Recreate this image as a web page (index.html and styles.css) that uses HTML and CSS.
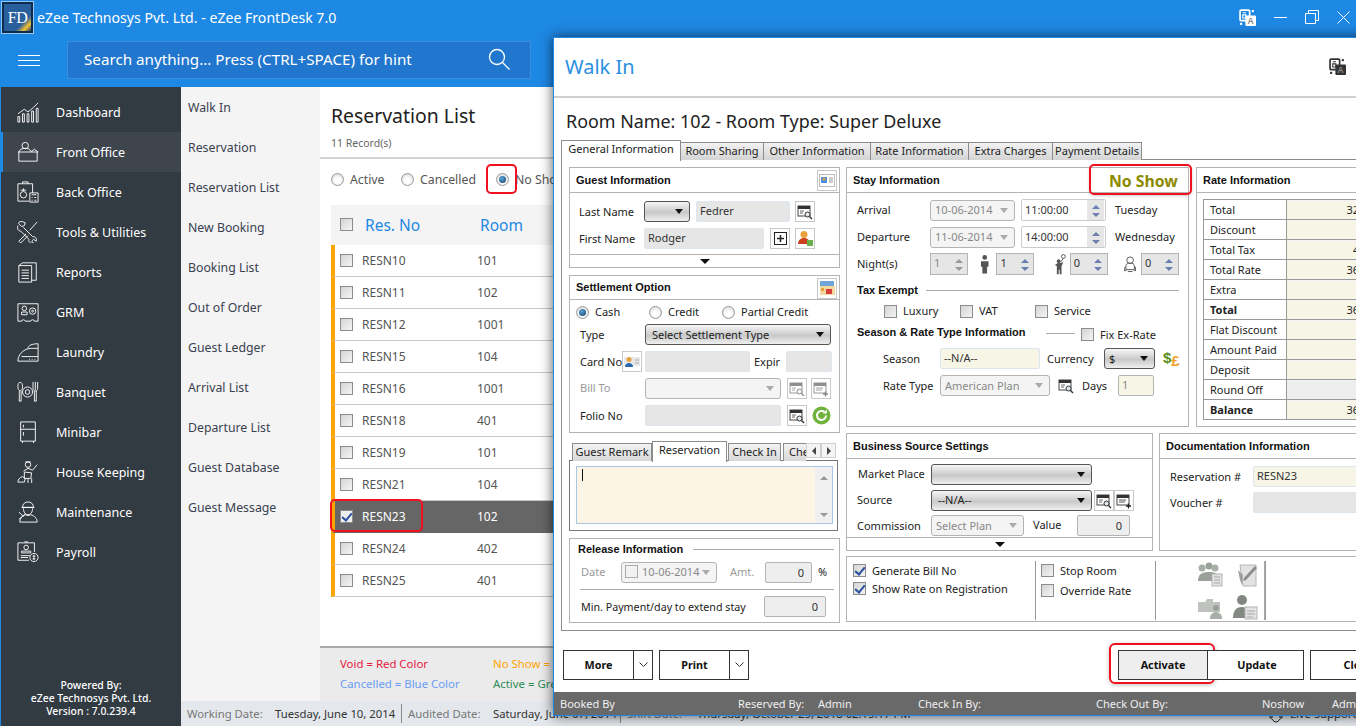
FILE: index.html
```html
<!DOCTYPE html>
<html lang="en">
<head>
<meta charset="utf-8">
<title>eZee FrontDesk 7.0</title>
<link rel="stylesheet" href="styles.css">
</head>
<body>
<svg class="defs" aria-hidden="true">
  <symbol id="i-cal" viewBox="0 0 16 16">
    <rect x="1" y="2" width="12" height="10" fill="#fff" stroke="#444"/>
    <rect x="1" y="2" width="12" height="3" fill="#333"/>
    <path d="M3 7h4M3 9h3" stroke="#666"/>
    <circle cx="10.5" cy="10.5" r="2.5" fill="#dfe8ee" stroke="#333"/>
    <path d="M12.5 12.5l2.5 2.5" stroke="#333" stroke-width="1.4"/>
  </symbol>
  <symbol id="i-add" viewBox="0 0 16 16">
    <rect x="1" y="2" width="12" height="10" fill="#fff" stroke="#444"/>
    <rect x="1" y="2" width="12" height="3" fill="#333"/>
    <path d="M3 7h7M3 9h6" stroke="#555"/>
    <path d="M12.5 10.500v5M10 13h5" stroke="#222" stroke-width="1.300"/>
  </symbol>
  <symbol id="i-lang" viewBox="0 0 16 16">
    <rect x="1" y="1" width="9" height="10" rx="1" fill="none" stroke="currentColor" stroke-width="1.600"/>
    <rect x="6" y="6" width="10" height="10" rx="1" fill="currentColor"/>
    <path d="M3.500 3.500h3M3.500 5.500h3v3h-3z" fill="none" stroke="currentColor"/>
    <text x="11" y="14.500" class="lang-a" text-anchor="middle">A</text>
    <rect x="12" y="1" width="2" height="2" fill="currentColor"/>
    <rect x="1" y="13" width="2" height="2" fill="currentColor"/>
  </symbol>
</svg>

<div class="app">
  <header class="top">
    <div class="titlebar">
      <div class="logo"><span>FD</span></div>
      <div class="app-title">eZee Technosys Pvt. Ltd. - eZee FrontDesk 7.0</div>
      <div class="winctl">
        <svg class="lang-ic light" width="17" height="17"><use href="#i-lang"/></svg>
        <svg width="13" height="15" viewBox="0 0 13 15"><path d="M0 7.500h13" stroke="#fff"/></svg>
        <svg width="14" height="15" viewBox="0 0 14 15"><path d="M3.500 3.500v-3h10v10h-3M.5 3.500h10v10H.5z" fill="none" stroke="#fff"/></svg>
        <svg width="13" height="15" viewBox="0 0 13 15"><path d="M.5 1.500l12 12M12.500 1.500l-12 12" stroke="#fff"/></svg>
      </div>
    </div>
    <div class="searchbar">
      <div class="burger"><i></i><i></i><i></i></div>
      <div class="search">
        <span>Search anything... Press (CTRL+SPACE) for hint</span>
        <svg width="22" height="22" viewBox="0 0 22 22"><circle cx="9" cy="9" r="7.500" fill="none" stroke="#fff" stroke-width="1.300"/><path d="M14.500 14.500l7 7" stroke="#fff" stroke-width="1.300"/></svg>
      </div>
    </div>
  </header>

  <div class="workspace">
    <nav class="side">
      <ul class="side-list">
        <li class="side-item">
          <svg class="nav-ic" viewBox="0 0 24 24"><path d="M1 14l7-5 4 3 6-5 5-5M1 17h2v6H1zM6 14h2v9H6zM11 14h2v9h-2zM16 11h2v12h-2zM21 8h2v15h-2z"/></svg>
          <span>Dashboard</span></li>
        <li class="side-item active">
          <svg class="nav-ic" viewBox="0 0 24 24"><circle cx="9" cy="5" r="3.500"/><path d="M2 12c1-3 4-4 7-4s5 1 6 3M15 12l4-3 4 3M1 12h22M2 12v10h20V12"/></svg>
          <span>Front Office</span></li>
        <li class="side-item">
          <svg class="nav-ic" viewBox="0 0 24 24"><path d="M1 3h16v10M1 3v19h12M6 3V1h6v2M14 13h9v10h-9zM16 15h5M16 18h1M19 18h2M16 21h1M19 21h2"/><circle cx="7" cy="15" r="3.500"/><path d="M7 8v3M4 10h6"/></svg>
          <span>Back Office</span></li>
        <li class="side-item">
          <svg class="nav-ic" viewBox="0 0 24 24"><path d="M2 3l3 3 3-1 1-3C6 0 1 0 2 3zM7 7l10 10c3 0 5 2 4 5l-3-2-2 2 2 2c-3 1-6-1-5-4L4 11c-3 0-4-3-3-6M22 1l-8 9M10 14l-8 8 2 2 8-8"/></svg>
          <span>Tools &amp; Utilities</span></li>
        <li class="side-item">
          <svg class="nav-ic" viewBox="0 0 24 24"><path d="M2 5h14v18H2zM2 5l4-3h15v19h-5M5 10h8M5 13h8M5 16h8M5 19h8"/></svg>
          <span>Reports</span></li>
        <li class="side-item">
          <svg class="nav-ic" viewBox="0 0 24 24"><path d="M1 3h22v19h-4c0-2-4-2-4 0H9c0-2-4-2-4 0H1z"/><circle cx="8" cy="8" r="2.500"/><path d="M5 15v-3h6v3z"/><circle cx="17" cy="11" r="3.500"/><circle cx="17" cy="11" r="1"/></svg>
          <span>GRM</span></li>
        <li class="side-item">
          <svg class="nav-ic" viewBox="0 0 24 24"><path d="M1 22c0-7 6-14 15-14h7v14zM12 8c0-3 4-5 11-5v5M5 17h18M13 20h1M16 20h1M19 20h1"/></svg>
          <span>Laundry</span></li>
        <li class="side-item">
          <svg class="nav-ic" viewBox="0 0 24 24"><ellipse cx="3.500" cy="6" rx="2.500" ry="4.500"/><path d="M2.500 11v11h2V11M20 1v9M17.500 1v7c0 2 1 3 2.500 3s2.500-1 2.500-3V1M19 11v11h2V11"/><circle cx="11.500" cy="12" r="5.500"/><circle cx="11.500" cy="12" r="2.500"/></svg>
          <span>Banquet</span></li>
        <li class="side-item">
          <svg class="nav-ic" viewBox="0 0 24 24"><path d="M4 1h16v21H4zM4 9h16M7 4v3M7 12v4M6 22v2M18 22v2"/></svg>
          <span>Minibar</span></li>
        <li class="side-item">
          <svg class="nav-ic" viewBox="0 0 24 24"><circle cx="12" cy="4" r="3"/><path d="M9 1l6 0M7 11l5-3 5 2 5-6M8 12l8 1-1 6H8zM1 23c0-3 2-5 5-6l3 2-1 4zM12 19v5M16 19v5"/></svg>
          <span>House Keeping</span></li>
        <li class="side-item">
          <svg class="nav-ic" viewBox="0 0 24 24"><path d="M6 7c0-8 12-8 12 0zM5 7h14M7 8c0 4 2 7 5 7s5-3 5-7M3 23c0-4 3-7 6-8 2 1 4 1 6 0 4 1 7 4 7 8zM2 12l5 5M2 20l7-6"/></svg>
          <span>Maintenance</span></li>
        <li class="side-item">
          <svg class="nav-ic" viewBox="0 0 24 24"><path d="M19 12V2H1v19h12M8 1h4M5 13v-2h10v2zM4 16h10M4 18h8"/><circle cx="10" cy="7" r="2.500"/><circle cx="18.500" cy="18" r="4.500"/><path d="M18.500 15v6M17 16.500h3M17 19.500h3"/></svg>
          <span>Payroll</span></li>
      </ul>
      <div class="powered">
        <div>Powered By:</div>
        <div>eZee Technosys Pvt. Ltd.</div>
        <div>Version : 7.0.239.4</div>
      </div>
    </nav>

    <div class="content">
      <div class="columns">
        <ul class="submenu">
          <li>Walk In</li><li>Reservation</li><li>Reservation List</li><li>New Booking</li>
          <li>Booking List</li><li>Out of Order</li><li>Guest Ledger</li><li>Arrival List</li>
          <li>Departure List</li><li>Guest Database</li><li>Guest Message</li>
        </ul>
        <main class="main">
          <div class="main-head">
            <h1>Reservation List</h1>
            <div class="records">11 Record(s)</div>
          </div>
          <div class="filters">
            <label class="filter f-active"><i class="radio"></i>Active</label>
            <label class="filter f-cancel"><i class="radio"></i>Cancelled</label>
            <label class="filter"><i class="radio on mark-red"></i>No Show</label>
          </div>
          <div class="grid-table">
            <div class="gt-head">
              <span><i class="cb"></i></span><span>Res. No</span><span>Room</span>
            </div>
            <div class="gt-row"><span><i class="cb"></i></span><span>RESN10</span><span>101</span></div>
            <div class="gt-row"><span><i class="cb"></i></span><span>RESN11</span><span>102</span></div>
            <div class="gt-row"><span><i class="cb"></i></span><span>RESN12</span><span>1001</span></div>
            <div class="gt-row"><span><i class="cb"></i></span><span>RESN15</span><span>104</span></div>
            <div class="gt-row"><span><i class="cb"></i></span><span>RESN16</span><span>1001</span></div>
            <div class="gt-row"><span><i class="cb"></i></span><span>RESN18</span><span>401</span></div>
            <div class="gt-row"><span><i class="cb"></i></span><span>RESN19</span><span>101</span></div>
            <div class="gt-row"><span><i class="cb"></i></span><span>RESN21</span><span>104</span></div>
            <div class="gt-row selected"><span><i class="cb on"></i></span><span>RESN23</span><span>102</span></div>
            <div class="gt-row"><span><i class="cb"></i></span><span>RESN24</span><span>402</span></div>
            <div class="gt-row"><span><i class="cb"></i></span><span>RESN25</span><span>401</span></div>
          </div>
          <div class="legend">
            <span class="c-void">Void = Red Color</span><span class="c-noshow">No Show = Orange Color</span>
            <span class="c-cancel">Cancelled = Blue Color</span><span class="c-act">Active = Green Color</span>
          </div>
        </main>
      </div>
      <footer class="status">
        <span class="st-l wl-88">Working Date:</span><span class="st-v w-126">Tuesday, June 10, 2014</span>
        <span class="st-l st-sep wl-92">Audited Date:</span><span class="st-v w-127">Saturday, June 07, 2014</span>
        <span class="st-l st-sep wl-77">Shift Date:</span><span class="st-v w-571">Thursday, October 25, 2018 02:15:17 PM</span>
        <svg class="live-ic" width="16" height="18" viewBox="0 0 16 18"><path d="M3 9V7a5 5 0 0 1 10 0v2M2 9h2v4H2zM12 9h2v4h-2zM4 14c1 2 3 3 4 3s3-1 4-3" fill="none" stroke="#222"/></svg>
        <span class="st-v">Live Support</span>
      </footer>
    </div>
  </div>

  <section class="window">
    <div class="win-head">
      <h2>Walk In</h2>
      <svg class="lang-ic dark" width="17" height="17"><use href="#i-lang"/></svg>
    </div>
    <div class="room-title">Room Name: 102 - Room Type: Super Deluxe</div>

    <div class="tabs">
      <span class="tab active w-120">General Information</span>
      <span class="tab w-83">Room Sharing</span>
      <span class="tab w-107">Other Information</span>
      <span class="tab w-98">Rate Information</span>
      <span class="tab w-84">Extra Charges</span>
      <span class="tab w-89">Payment Details</span>
    </div>

    <div class="tabpage">
      <div class="col-left">
        <div class="panel h-guest">
          <div class="panel-h">
            <b>Guest Information</b>
            <span class="ibtn head-btn"><svg width="16" height="13" viewBox="0 0 16 13"><rect x=".5" y=".5" width="15" height="12" fill="#fff" stroke="#bbb"/><rect x="2" y="3" width="6" height="6" fill="#4a90d9"/><circle cx="5" cy="5" r="1.500" fill="#e8a04c"/><path d="M10 4h4M10 6h4M10 8h4" stroke="#999"/></svg></span>
          </div>
          <div class="panel-b guest-b">
            <div class="r">
              <span class="lbl w-65">Last Name</span>
              <span class="sel w-46"></span>
              <span class="inp w-94 ml-6">Fedrer</span>
              <span class="ibtn ml-5"><svg width="16" height="16"><use href="#i-cal"/></svg></span>
            </div>
            <div class="r mt-6">
              <span class="lbl w-65">First Name</span>
              <span class="inp w-120">Rodger</span>
              <span class="ibtn ml-6"><svg width="13" height="13" viewBox="0 0 13 13"><rect x=".5" y=".5" width="12" height="12" fill="#fff" stroke="#222"/><path d="M3 6.500h7M6.500 3v7" stroke="#222" stroke-width="1.500"/></svg></span>
              <span class="ibtn ml-5"><svg width="17" height="17" viewBox="0 0 17 17"><circle cx="7" cy="4.500" r="3.500" fill="#e9a23b"/><path d="M1 14c0-4 3-6 6-6s6 2 6 6z" fill="#c8401e"/><rect x="10" y="10" width="6" height="6" fill="#6ab04c"/></svg></span>
            </div>
          </div>
          <div class="collapse"><i></i></div>
        </div>

        <div class="panel h-settle mt-7">
          <div class="panel-h short">
            <b>Settlement Option</b>
            <span class="ibtn head-btn"><svg width="17" height="15" viewBox="0 0 17 15"><rect x="1" y="0" width="14" height="6" fill="#6fa5d8"/><rect x="1" y="5" width="15" height="9" fill="#f3d9a0"/><rect x="7" y="8" width="6" height="5" fill="#d93a3a"/><rect x="2" y="7" width="3" height="3" fill="#e9a23b"/></svg></span>
          </div>
          <div class="panel-b settle-b">
            <div class="r radios">
              <label class="ritem w-73"><i class="radio on"></i>Cash</label>
              <label class="ritem w-73"><i class="radio"></i>Credit</label>
              <label class="ritem"><i class="radio"></i>Partial Credit</label>
            </div>
            <div class="r mt-4 pl-4">
              <span class="lbl w-65">Type</span>
              <span class="sel w-186">Select Settlement Type</span>
            </div>
            <div class="r mt-6 pl-4">
              <span class="lbl w-42">Card No</span>
              <span class="ibtn"><svg width="16" height="16" viewBox="0 0 16 16"><rect x="0" y="3" width="16" height="9" fill="#e8e8e8"/><circle cx="5" cy="5.500" r="2.500" fill="#e9a23b"/><path d="M1 13c0-3 2-4 4-4s4 1 4 4z" fill="#2868b0"/><path d="M11 6h4M11 9h4" stroke="#aaa"/></svg></span>
              <span class="inp w-105 ml-3"></span>
              <span class="lbl ml-4 w-32">Expir</span>
              <span class="inp w-46"></span>
            </div>
            <div class="r mt-6 pl-4">
              <span class="lbl muted up w-65">Bill To</span>
              <span class="sel dis w-136"></span>
              <span class="ibtn ml-6 faded"><svg width="16" height="16"><use href="#i-cal"/></svg></span>
              <span class="ibtn ml-4 faded"><svg width="16" height="16"><use href="#i-add"/></svg></span>
            </div>
            <div class="r mt-6 pl-4">
              <span class="lbl w-65">Folio No</span>
              <span class="inp w-136"></span>
              <span class="ibtn ml-6"><svg width="16" height="16"><use href="#i-cal"/></svg></span>
              <span class="ibtn ml-4 green-wrap"><svg width="19" height="19" viewBox="0 0 19 19"><circle cx="9.500" cy="9.500" r="9" fill="#6fb33c"/><path d="M14 9.500a4.500 4.500 0 1 1-1.500-3.400" fill="none" stroke="#fff" stroke-width="2"/><path d="M15 3.500v4h-4z" fill="#fff"/></svg></span>
            </div>
          </div>
        </div>

        <div class="itabs mt-8">
          <span class="itab w-80">Guest Remark</span>
          <span class="itab active w-75">Reservation</span>
          <span class="itab w-53 ml-1">Check In</span>
          <span class="itab w-23 ml-2 cut">Check Out</span>
          <span class="arrow"><i class="tri-l"></i></span>
          <span class="arrow"><i class="tri-r"></i></span>
        </div>
        <div class="ipage">
          <div class="memo">
            <div class="memo-text"><i class="caret"></i></div>
            <div class="memo-scroll"><i class="tri-u"></i><i class="tri-d"></i></div>
          </div>
        </div>

        <div class="panel h-release mt-7">
          <div class="sec-title r"><b>Release Information</b><i class="rule ml-10"></i></div>
          <div class="r mt-6 ml-3">
            <span class="lbl muted up w-40">Date</span>
            <span class="sel dis up w-96 date-sel"><i class="cb grey"></i>10-06-2014</span>
            <span class="lbl muted up ml-13 w-35">Amt.</span>
            <span class="inp bordered num w-47">0</span>
            <span class="lbl up ml-6">%</span>
          </div>
          <div class="hr"></div>
          <div class="r mt-6 ml-3 min-row">
            <span class="lbl w-183 tight">Min. Payment/day to extend stay</span>
            <span class="inp bordered num w-62">0</span>
          </div>
        </div>
      </div>

      <div class="col-right">
        <div class="row-1">
          <div class="panel stay">
            <div class="panel-h">
              <b>Stay Information</b>
              <strong class="noshow">No Show</strong>
            </div>
            <div class="panel-b stay-b">
              <div class="r">
                <span class="lbl up w-73">Arrival</span>
                <span class="sel dis up w-85 grey-t">10-06-2014</span>
                <span class="spin plain w-85 ml-6"><span class="spin-v">11:00:00</span><span class="spin-b"><i class="tri-u blue"></i><i class="tri-d blue"></i></span></span>
                <span class="lbl up ml-9">Tuesday</span>
              </div>
              <div class="r mt-5">
                <span class="lbl up w-73">Departure</span>
                <span class="sel dis up w-85 grey-t">11-06-2014</span>
                <span class="spin plain w-85 ml-6"><span class="spin-v">14:00:00</span><span class="spin-b"><i class="tri-u blue"></i><i class="tri-d blue"></i></span></span>
                <span class="lbl up ml-9">Wednesday</span>
              </div>
              <div class="r mt-5">
                <span class="lbl up w-73">Night(s)</span>
                <span class="spin w-38"><span class="spin-v grey-t">1</span><span class="spin-b"><i class="tri-u"></i><i class="tri-d"></i></span></span>
                <svg class="ml-12" width="10" height="20" viewBox="0 0 10 20"><circle cx="5" cy="3" r="2.500" fill="#555"/><path d="M1 7h8v6H7.500v7h-5v-7H1z" fill="#555"/></svg>
                <span class="spin w-38 ml-7"><span class="spin-v">1</span><span class="spin-b"><i class="tri-u blue"></i><i class="tri-d blue"></i></span></span>
                <svg class="ml-20" width="12" height="22" viewBox="0 0 12 22"><circle cx="10" cy="3" r="2" fill="none" stroke="#555"/><path d="M10 5L7 9" stroke="#555"/><circle cx="5" cy="8" r="2" fill="#555"/><path d="M1 12l3-2h3l3-1-2 4v9H6v-5H5v5H3v-9z" fill="#555"/></svg>
                <span class="spin w-38 ml-4"><span class="spin-v">0</span><span class="spin-b"><i class="tri-u blue"></i><i class="tri-d blue"></i></span></span>
                <svg class="ml-16" width="13" height="18" viewBox="0 0 13 18"><circle cx="6.500" cy="5" r="3.500" fill="none" stroke="#555"/><path d="M2 11c0-2 2-3 4.500-3S11 9 11 11v4H2zM1 12l-.5 4h2M12 12l.5 4h-2M4 17h5" fill="none" stroke="#555"/></svg>
                <span class="spin w-38 ml-5"><span class="spin-v">0</span><span class="spin-b"><i class="tri-u blue"></i><i class="tri-d blue"></i></span></span>
              </div>
              <div class="r mt-8 sub-h"><b>Tax Exempt</b><i class="rule ml-8"></i></div>
              <div class="r mt-7 checks">
                <label class="citem w-76"><i class="cb"></i>Luxury</label>
                <label class="citem w-75"><i class="cb"></i>VAT</label>
                <label class="citem"><i class="cb"></i>Service</label>
              </div>
              <div class="r mt-7 season-h">
                <b class="w-189">Season &amp; Rate Type Information</b>
                <i class="rule-s"></i>
                <label class="citem ml-6"><i class="cb"></i>Fix Ex-Rate</label>
              </div>
              <div class="r mt-7 pl-26">
                <span class="lbl w-57">Season</span>
                <span class="inp cream w-100">--N/A--</span>
                <span class="lbl ml-7 w-57">Currency</span>
                <span class="sel cur w-51">$</span>
                <b class="money ml-8"><span>$</span><span>£</span></b>
              </div>
              <div class="r mt-6 pl-26">
                <span class="lbl w-57">Rate Type</span>
                <span class="sel dis w-110">American Plan</span>
                <svg class="ml-8" width="16" height="16"><use href="#i-cal"/></svg>
                <span class="lbl ml-8 w-36">Days</span>
                <span class="inp cream bordered grey-t w-36">1</span>
              </div>
            </div>
          </div>

          <div class="panel rate">
            <div class="panel-h"><b>Rate Information</b></div>
            <div class="rate-t">
              <div class="rt-r"><span>Total</span><span>320.00</span></div>
              <div class="rt-r"><span>Discount</span><span></span></div>
              <div class="rt-r"><span>Total Tax</span><span>40.00</span></div>
              <div class="rt-r"><span>Total Rate</span><span>360.00</span></div>
              <div class="rt-r"><span>Extra</span><span></span></div>
              <div class="rt-r bold"><span>Total</span><span>360.00</span></div>
              <div class="rt-r"><span>Flat Discount</span><span></span></div>
              <div class="rt-r"><span>Amount Paid</span><span></span></div>
              <div class="rt-r"><span>Deposit</span><span></span></div>
              <div class="rt-r grey"><span>Round Off</span><span></span></div>
              <div class="rt-r bold"><span>Balance</span><span>360.00</span></div>
            </div>
          </div>
        </div>

        <div class="row-2">
          <div class="panel biz">
            <div class="panel-h"><b>Business Source Settings</b></div>
            <div class="panel-b biz-b">
              <div class="r">
                <span class="lbl w-74 nudge up">Market Place</span>
                <span class="sel w-161"></span>
              </div>
              <div class="r mt-5">
                <span class="lbl up w-74">Source</span>
                <span class="sel up w-161">--N/A--</span>
                <span class="ibtn ml-2"><svg width="16" height="16"><use href="#i-cal"/></svg></span>
                <span class="ibtn"><svg width="16" height="16"><use href="#i-add"/></svg></span>
              </div>
              <div class="r mt-4">
                <span class="lbl w-74">Commission</span>
                <span class="sel dis w-93">Select Plan</span>
                <span class="lbl up ml-9 w-44">Value</span>
                <span class="inp bordered num w-53">0</span>
              </div>
            </div>
            <div class="collapse"><i></i></div>
          </div>

          <div class="panel doc">
            <div class="panel-h"><b>Documentation Information</b></div>
            <div class="panel-b doc-b">
              <div class="r">
                <span class="lbl w-83">Reservation #</span>
                <span class="inp cream w-200">RESN23</span>
              </div>
              <div class="r mt-5">
                <span class="lbl w-83">Voucher #</span>
                <span class="inp w-200"></span>
              </div>
            </div>
          </div>
        </div>

        <div class="panel opts">
          <div class="opt-col c1">
            <label class="citem"><i class="cb on"></i>Generate Bill No</label>
            <label class="citem"><i class="cb on"></i>Show Rate on Registration</label>
          </div>
          <div class="opt-col c2">
            <label class="citem"><i class="cb"></i>Stop Room</label>
            <label class="citem"><i class="cb"></i>Override Rate</label>
          </div>
          <div class="opt-col c3">
            <svg width="26" height="26" viewBox="0 0 26 26"><circle cx="5" cy="7" r="3.500" fill="#9aa09a"/><circle cx="12" cy="5" r="3.500" fill="#8a908a"/><circle cx="18" cy="7" r="3.500" fill="#9aa09a"/><path d="M1 20c0-7 4-9 11-9s10 2 10 7v2z" fill="#8a908a"/><rect x="15" y="13" width="10" height="12" fill="#ddd" stroke="#aaa"/><path d="M17 16h6M17 19h6M17 22h6" stroke="#999"/></svg>
            <svg width="26" height="26" viewBox="0 0 26 26"><path d="M8 4h16v21H11z" fill="#ddd" stroke="#aaa"/><path d="M6 9l5 5-1 10-2-5z" fill="#8a908a"/><path d="M12 17L23 5l2 2-11 12-3 1z" fill="#777"/></svg>
            <svg width="26" height="26" viewBox="0 0 26 26"><path d="M1 8h7l2-3h6v3h7v10H1z" fill="#b4b8b4"/><circle cx="19" cy="14" r="3" fill="#8a908a"/><path d="M13 25c0-5 3-7 6-7s6 2 6 7z" fill="#9aa09a"/></svg>
            <svg width="26" height="26" viewBox="0 0 26 26"><circle cx="10" cy="6" r="5" fill="#6e746e"/><path d="M1 24c0-8 4-11 9-11s8 3 8 11z" fill="#6e746e"/><rect x="13" y="13" width="12" height="12" fill="#ddd" stroke="#aaa"/><path d="M15 17h8M15 20h8M15 23h6" stroke="#999"/></svg>
          </div>
          <div class="opt-col c4"></div>
        </div>
      </div>
    </div>

    <div class="actions">
      <div class="split"><span class="btn w-71">More</span><span class="btn-arrow"><svg width="9" height="6" viewBox="0 0 9 6"><path d="M.5.500l4 4 4-4" fill="none" stroke="#333"/></svg></span></div>
      <div class="split ml-6"><span class="btn w-71">Print</span><span class="btn-arrow"><svg width="9" height="6" viewBox="0 0 9 6"><path d="M.5.500l4 4 4-4" fill="none" stroke="#333"/></svg></span></div>
      <span class="btn activate w-90">Activate</span>
      <span class="btn w-96 update">Update</span>
      <span class="btn w-96 ml-6">Close</span>
    </div>

    <div class="win-foot">
      <span class="w-178">Booked By</span>
      <span class="w-80">Reserved By:</span>
      <span class="w-100">Admin</span>
      <span class="w-178">Check In By:</span>
      <span class="w-166">Check Out By:</span>
      <span class="w-70">Noshow</span>
      <span>Admin</span>
    </div>
  </section>
</div>
</body>
</html>
```

FILE: styles.css
```css
*, *::before, *::after { box-sizing: border-box; }
html, body { margin: 0; padding: 0; height: 100%; overflow: hidden; }
body { font-family: "Noto Sans", "Open Sans", sans-serif; font-size: 11px; color: #222; background: #fff; }
ul { list-style: none; margin: 0; padding: 0; }
h1, h2 { margin: 0; font-weight: 400; }
.defs { position: absolute; width: 0; height: 0; }
label { display: inline-flex; align-items: center; }
i { display: block; flex: none; }

.app { width: 1356px; height: 726px; position: relative; overflow: hidden; display: flex; flex-direction: column; }

/* header */
.top { height: 87px; background: #1e88e5; color: #fff; flex: none; }
.titlebar { height: 40px; display: flex; align-items: flex-start; }
.logo { width: 31px; height: 31px; margin: 2px 0 0 2px; background: linear-gradient(135deg, #2a5f9e 70%, #f2c230 85%, #1c3d6e); border: 2px solid #0d2c52; outline: 1px solid #9cc8ef; display: flex; align-items: center; justify-content: center; flex: none; }
.logo span { font-family: "Liberation Serif", serif; font-size: 16px; line-height: 1; color: #fff; letter-spacing: -.5px; }
.app-title { margin: 8px 0 0 4px; font-size: 14.100px; line-height: 20px; }
.winctl { margin-left: auto; padding: 9px 6px 0 0; display: flex; align-items: center; gap: 18px; }
.lang-ic.light { color: #fff; }
.lang-ic.dark { color: #333; }
.lang-a { font: bold 8px "Liberation Sans", sans-serif; fill: #888; }
.searchbar { height: 47px; display: flex; align-items: flex-start; }
.burger { width: 22px; margin: 15px 27px 0 18px; display: flex; flex-direction: column; gap: 4px; }
.burger i { height: 1px; background: #fff; }
.search { width: 464px; height: 38px; margin-top: 1px; background: #2176cd; border: 1px solid #3d8fdb; display: flex; align-items: center; justify-content: space-between; padding: 0 20px 2px 16px; font-size: 15.200px; }

/* layout */
.workspace { flex: 1; display: flex; min-height: 0; }
.side { width: 181px; background: #323a42; border-left: 1px solid #1e88e5; color: #fff; padding-top: 5px; display: flex; flex-direction: column; flex: none; }
.side-list { flex: 1; }
.side-item { height: 40px; display: flex; align-items: center; font-size: 12.500px; padding-left: 16px; }
.side-item.active { background: #3e454d; border-left: 3px solid #1e88e5; margin-left: -1px; padding-left: 14px; }
.side-item span { margin-left: 17px; }
.nav-ic { width: 22px; height: 22px; fill: none; stroke: #fff; stroke-width: 1; flex: none; }
.powered { text-align: center; font-size: 10.400px; line-height: 13px; padding-bottom: 8px; font-weight: 500; }
.content { flex: 1; display: flex; flex-direction: column; min-width: 0; }
.columns { flex: 1; display: flex; min-height: 0; }
.submenu { width: 139px; background: #f4f4f4; padding: 1px 0 0 7px; font-size: 12.300px; color: #3a4150; flex: none; }
.submenu li { height: 40px; line-height: 40px; }
.main { flex: 1; display: flex; flex-direction: column; min-width: 0; }
.main-head { height: 72px; border-bottom: 2px solid #d4d4d4; padding: 15px 0 0 11px; flex: none; }
.main-head h1 { font-size: 19.400px; line-height: 28px; color: #222; }
.records { font-size: 10.500px; color: #666; margin-top: 6px; line-height: 14px; }
.filters { height: 46px; display: flex; align-items: center; padding: 0 0 6px 11px; font-size: 12.300px; color: #555; flex: none; }
.filter .radio { margin-right: 6px; }
.f-active { width: 70px; }
.f-cancel { width: 95px; }
.grid-table { margin-left: 11px; flex: 1; }
.gt-head { height: 40px; background: #f4f4f4; display: grid; grid-template-columns: 25px 115px 1fr; align-items: center; padding: 0 0 1px 9px; font-size: 15.500px; color: #1e88e5; }
.gt-row { height: 32px; border-left: 4px solid #ffa500; border-bottom: 1px solid #c8c8c8; display: grid; grid-template-columns: 27px 115px 1fr; align-items: center; padding-left: 0; font-size: 12px; color: #555; position: relative; }
.gt-row > span:first-child { padding-left: 5px; }
.gt-row.selected { background: #666; color: #fff; border-bottom-color: #666; }
.gt-row.selected::after { content: ""; position: absolute; left: -5px; top: -2px; width: 93px; height: 33px; border: 2px solid #f01020; border-radius: 5px; }
.legend { height: 55px; background: #ebebeb; border-top: 2px solid #aaa; display: grid; grid-template-columns: 153px 1fr; grid-auto-rows: 20px; align-content: center; padding: 2px 0 0 20px; font-size: 11.400px; flex: none; }
.c-void { color: #e8173d; } .c-noshow { color: #ffa500; } .c-cancel { color: #6a9bf4; } .c-act { color: #2e8b57; }
.status { height: 25px; background: #e4e8ec; display: flex; align-items: center; padding-left: 6px; font-size: 11.300px; flex: none; white-space: nowrap; }
.status > * { flex: none; }
.st-l { color: #777; }
.st-v { color: #333; }
.st-sep { border-left: 1px solid #888; padding-left: 6px; margin-left: 0; height: 19px; line-height: 19px; }
.wl-88 { width: 88px; } .wl-92 { width: 92px; } .wl-77 { width: 77px; }
.live-ic { margin-right: 6px; }

/* radios / checks */
.radio { width: 13px; height: 13px; border-radius: 50%; border: 1px solid #9a9a9a; background: radial-gradient(circle at 50% 60%, #fff 30%, #cfcfcf 100%); position: relative; }
.radio.on::before { content: ""; position: absolute; left: 2px; top: 2px; width: 7px; height: 7px; border-radius: 50%; background: radial-gradient(circle at 40% 35%, #5aa6dc, #123d63); }
.radio.mark-red::after { content: ""; position: absolute; left: -11px; top: -10px; width: 31px; height: 30px; border: 2px solid #f01020; border-radius: 5px; }
.cb { width: 13px; height: 13px; border: 1px solid #8c8c8c; background: linear-gradient(135deg, #d4d4d4, #f4f4f4); position: relative; }
.cb.on::after { content: ""; position: absolute; left: 3px; top: 0; width: 6px; height: 10px; border: solid #2b4f9e; border-width: 0 2px 2px 0; transform: rotate(40deg); }
.gt-row.selected .cb { background: #eee; }
.cb.grey { border-color: #aaa; background: #f2f2f2; margin-right: 4px; }

/* floating window */
.window { position: absolute; left: 553px; top: 37px; width: 900px; height: 679px; background: #fff; border: 1px solid #1e88e5; box-shadow: 0 0 12px rgba(0,0,0,.65); display: flex; flex-direction: column; overflow: hidden; z-index: 2; }
.win-head { width: 802px; height: 59px; display: flex; align-items: center; justify-content: space-between; padding: 0 10px 2px 11px; flex: none; }
.win-head h2 { font-size: 20px; color: #2b8fe0; }
.room-title { border-top: 2px solid #cfcfcf; height: 44px; padding: 11px 0 0 12px; font-size: 17.900px; line-height: 24px; color: #222; margin-top: -1px; flex: none; }
.tabs { height: 20px; margin-left: 7px; display: flex; align-items: flex-end; position: relative; z-index: 1; flex: none; font-size: 11px; }
.tab { height: 18px; background: linear-gradient(#f2f2f2, #d4d4d4); border: 1px solid #8c8c8c; border-bottom: none; border-left-width: 0; display: flex; align-items: center; justify-content: center; padding-bottom: 2px; }
.tab.active { background: #fff; border-left-width: 1px; margin-bottom: -1px; height: 21px; padding-bottom: 6px; }
.tabpage { margin-left: 7px; margin-top: -1px; height: 472px; border: 1px solid #8c8c8c; border-right: none; padding: 7px 0 0 7px; display: flex; gap: 6px; flex: none; }

.panel { border: 1px solid #b4b4b4; position: relative; background: #fff; }
.panel-h { height: 25px; border-bottom: 1px solid #b4b4b4; display: flex; align-items: center; padding-left: 6px; position: relative; flex: none; }
.panel-h.short { height: 24px; padding-bottom: 2px; }
.panel b, .sub-h b, .season-h b { font: bold 11px "Liberation Sans", sans-serif; color: #111; }
.head-btn { position: absolute; right: 2px; top: 2px; }
.col-left { width: 271px; flex: none; display: flex; flex-direction: column; }
.col-right { width: 560px; flex: none; }
.h-guest { height: 101px; }
.h-settle { height: 158px; }
.h-release { height: 85px; padding: 3px 5px 0 8px; }
.guest-b { padding: 8px 0 0 9px; height: 61px; }
.settle-b { padding: 4px 0 0 6px; }
.collapse { height: 13px; border-top: 1px solid #b4b4b4; display: flex; justify-content: center; padding-top: 4px; }
.collapse i { width: 0; height: 0; border: 5px solid transparent; border-top-color: #111; border-bottom: 0; }

/* form atoms */
.r { display: flex; align-items: center; min-height: 14px; flex: none; }
.lbl { font-size: 11px; white-space: nowrap; flex: none; }
.lbl.up, .sel.up { padding-bottom: 2px; }
.tight { font-size: 10.700px; }
.nudge { padding-left: 1px; }
.muted { color: #999; }
.grey-t { color: #888 !important; }
.inp { height: 21px; background: #e6e6e6; border: 1px solid #dde5ee; border-radius: 2px; padding: 0 3px; line-height: 17px; font-size: 11px; flex: none; color: #333; white-space: nowrap; overflow: hidden; }
.inp.cream { background: #f7f5e6; }
.inp.bordered { border-color: #b4b4b4; background: #eee; }
.inp.cream.bordered { background: #f7f5e6; }
.inp.num { text-align: right; padding-right: 7px; line-height: 19px; }
.sel { height: 21px; border: 1px solid #555; border-radius: 3px; background: linear-gradient(#f6f6f6, #c9c9c9 55%, #efefef); display: flex; align-items: center; padding-left: 6px; position: relative; font-size: 11px; flex: none; white-space: nowrap; }
.sel::after { content: ""; position: absolute; right: 6px; top: 7px; width: 8px; height: 5px; border: 4px solid transparent; border-top: 5px solid #111; border-bottom: 0; }
.sel.dis { border-color: #b4b4b4; background: #f4f4f4; color: #888; padding-left: 4px; }
.sel.dis::after { border-top-color: #aaa; }
.sel.cur { padding-left: 4px; }
.date-sel { padding-left: 3px !important; }
.ibtn { width: 20px; height: 21px; border: 1px solid #c8c8c8; background: #fff; display: flex; align-items: center; justify-content: center; flex: none; }
.faded svg { opacity: .55; }
.green-wrap { border: none; }
.spin { height: 22px; border: 1px solid #b4b4b4; display: flex; background: #e6e6e6; flex: none; }
.spin.plain { background: #fff; border-color: #c8ccd0; border-radius: 2px; }
.spin-v { flex: 1; padding: 1px 0 0 3px; font-size: 11px; color: #333; line-height: 16px; }
.spin.plain .spin-v { line-height: 19px; padding-top: 0; }
.spin-b { width: 17px; display: flex; flex-direction: column; gap: 2px; padding: 2px 0; background: #e6e6e6; }
.spin.plain .spin-b { margin-right: 1px; }
.tri-u, .tri-d { width: 8px; height: 4px; border: 4px solid transparent; flex: none; }
.tri-u { border-bottom: 4px solid #999; border-top: 0; margin: 3px auto 0; }
.tri-d { border-top: 4px solid #999; border-bottom: 0; margin: 2px auto 0; }
.tri-u.blue { border-bottom-color: #6a7fb0; }
.tri-d.blue { border-top-color: #6a7fb0; }
.tri-l { width: 4px; height: 8px; border: 4px solid transparent; border-right: 4px solid #444; border-left: 0; }
.tri-r { width: 4px; height: 8px; border: 4px solid transparent; border-left: 4px solid #444; border-right: 0; }

/* inner tabs */
.itabs { height: 20px; display: flex; align-items: flex-end; padding-left: 3px; position: relative; z-index: 1; flex: none; }
.itab { height: 18px; border: 1px solid #8c8c8c; border-bottom: none; background: linear-gradient(#f2f2f2, #d8d8d8); display: flex; align-items: center; justify-content: center; white-space: nowrap; overflow: hidden; padding-bottom: 2px; }
.itab.active { background: #fff; height: 21px; margin-bottom: -1px; padding-bottom: 6px; }
.itab.cut { justify-content: flex-start; padding-left: 5px; border-right: none; }
.arrow { width: 15px; height: 15px; border: 1px solid #d0d0d0; background: #f4f4f4; margin: 0 0 3px 0; display: flex; align-items: center; justify-content: center; }
.ipage { width: 269px; height: 71px; border: 1px solid #777; padding: 5px 4px 0 6px; margin-top: -1px; flex: none; }
.memo { height: 58px; border: 1px solid #a9c8e8; background: #fcf4e4; display: flex; }
.memo-text { flex: 1; padding: 2px 0 0 5px; }
.caret { width: 1px; height: 12px; background: #111; }
.memo-scroll { width: 17px; background: #f0f0f0; display: flex; flex-direction: column; justify-content: space-between; padding: 6px 0; }

.sec-title { height: 14px; }
.rule { flex: 1; height: 1px; background: #aaa; }
.rule-s { width: 29px; height: 1px; background: #aaa; flex: none; }
.hr { height: 1px; background: #aaa; margin: 6px 0 0 2px; }
.min-row { height: 21px; }

/* right column */
.row-1 { display: flex; gap: 7px; height: 260px; }
.stay { width: 343px; flex: none; }
.rate { flex: 1; }
.stay-b { padding: 6px 9px 0 10px; }
.pl-26 { padding-left: 26px; }
.pl-4 { padding-left: 4px; }
.noshow { position: absolute; left: 262px; top: 3px; font: bold 15.800px "Noto Sans", sans-serif; color: #8c8a00; line-height: 20px; white-space: nowrap; }
.noshow::after { content: ""; position: absolute; left: -20px; top: -7px; width: 103px; height: 31px; border: 2px solid #f01020; border-radius: 5px; box-shadow: 0 1px 3px rgba(0,0,0,.2); }
.checks { padding-left: 27px; height: 14px; }
.checks .citem { padding-bottom: 2px; }
.checks .cb { top: 1px; }
.citem { font-size: 11px; white-space: nowrap; flex: none; }
.citem .cb { margin-right: 6px; }
.ritem { font-size: 11px; white-space: nowrap; flex: none; padding-bottom: 2px; }
.ritem .radio { margin-right: 6px; top: 1px; }
.radios { height: 16px; }
.season-h { height: 16px; }
.season-h b { padding-bottom: 2px; }
.season-h .citem { padding-top: 2px; }
.sub-h { height: 14px; }
.money { display: flex; font: bold 15px "Liberation Sans", sans-serif !important; }
.money span:first-child { color: #5b8f20; }
.money span:last-child { color: #f0a020; margin-top: 3px; }
.rate-t { margin: 6px 0 0 6px; border: 1px solid #999; border-bottom: 0; }
.rt-r { height: 20px; display: grid; grid-template-columns: 83px 1fr; border-bottom: 1px solid #999; line-height: 19px; }
.rt-r span:first-child { padding-left: 6px; border-right: 1px solid #999; }
.rt-r span:last-child { background: #f7f5e6; text-align: right; padding-right: 23px; border-top: 1px solid #f4f4f8; line-height: 17px; }
.rt-r.bold span { font-weight: 700; }
.rt-r.bold span:last-child { font-weight: 400; }
.rt-r.grey span:last-child { background: #eee; }
.row-2 { display: flex; gap: 6px; margin-top: 6px; height: 118px; }
.biz { width: 307px; flex: none; }
.doc { flex: 1; }
.biz-b { padding: 5px 0 0 10px; height: 78px; }
.doc-b { padding: 7px 0 0 10px; }
.opts { margin-top: 5px; height: 66px; display: flex; padding: 4px 0 1px; }
.opt-col { border-right: 1px solid #999; display: flex; flex-direction: column; flex: none; }
.c1 { width: 189px; padding: 2px 0 0 6px; gap: 4px; }
.c2 { width: 120px; padding: 2px 0 0 5px; gap: 6px; }
.opts .citem { height: 14px; }
.c3 { width: 109px; display: grid; grid-template-columns: 26px 26px; column-gap: 9px; row-gap: 6px; padding: 0 0 0 41px; opacity: .85; }

/* buttons */
.actions { height: 61px; padding: 19px 0 0 9px; display: flex; align-items: flex-start; flex: none; font: bold 10.800px "Noto Sans", sans-serif; }
.split { display: flex; }
.btn { height: 30px; border: 1px solid #333; display: flex; align-items: center; justify-content: center; background: #fff; color: #111; flex: none; position: relative; padding-bottom: 2px; }
.btn-arrow { width: 19px; height: 30px; border: 1px solid #333; border-left: 0; display: flex; align-items: center; justify-content: center; }
.activate { margin-left: 369px; background: #eee; }
.activate::after { content: ""; position: absolute; left: -10px; top: -8px; right: -8px; bottom: -5px; border: 2px solid #f01020; border-radius: 6px; box-shadow: 0 1px 4px rgba(0,0,0,.25); }
.update { border-left: 0; padding-left: 3px; }
.win-foot { height: 23px; background: #696969; color: #f0f0f0; display: flex; align-items: center; padding-left: 6px; font-size: 11px; flex: none; }

/* sizes */
.w-23{width:23px}.w-32{width:32px}.w-35{width:35px}.w-36{width:36px}.w-38{width:38px}.w-40{width:40px}.w-42{width:42px}.w-44{width:44px}.w-46{width:46px}.w-47{width:47px}.w-51{width:51px}.w-53{width:53px}.w-57{width:57px}.w-62{width:62px}.w-65{width:65px}.w-70{width:70px}.w-71{width:71px}.w-73{width:73px}.w-74{width:74px}.w-75{width:75px}.w-76{width:76px}.w-80{width:80px}.w-83{width:83px}.w-84{width:84px}.w-85{width:85px}.w-89{width:89px}.w-90{width:90px}.w-93{width:93px}.w-94{width:94px}.w-96{width:96px}.w-98{width:98px}.w-100{width:100px}.w-105{width:105px}.w-107{width:107px}.w-110{width:110px}.w-120{width:120px}.w-126{width:126px}.w-127{width:127px}.w-136{width:136px}.w-161{width:161px}.w-166{width:166px}.w-178{width:178px}.w-183{width:183px}.w-186{width:186px}.w-189{width:189px}.w-200{width:200px}.w-571{width:571px}
.ml-1{margin-left:1px}.ml-2{margin-left:2px}.ml-3{margin-left:3px}.ml-4{margin-left:4px}.ml-5{margin-left:5px}.ml-6{margin-left:6px}.ml-7{margin-left:7px}.ml-8{margin-left:8px}.ml-9{margin-left:9px}.ml-10{margin-left:10px}.ml-12{margin-left:12px}.ml-13{margin-left:13px}.ml-16{margin-left:16px}.ml-20{margin-left:20px}
.mt-4{margin-top:4px}.mt-5{margin-top:5px}.mt-6{margin-top:6px}.mt-7{margin-top:7px}.mt-8{margin-top:8px}
```
